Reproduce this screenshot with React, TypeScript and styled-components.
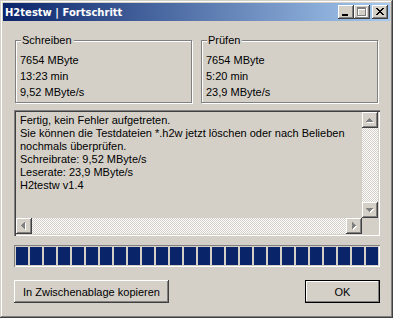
import React from "react";
import styled, { createGlobalStyle, css } from "styled-components";

const face = "#d4d0c8";
const shadow = "#808080";
const darkShadow = "#404040";
const navy = "#0a246a";

const GlobalStyle = createGlobalStyle`
    html, body {
        margin: 0;
        padding: 0;
    }
    body {
        background-color: ${face};
        font-family: "Liberation Sans", Arial, sans-serif;
        font-size: 11px;
        color: #000;
    }
`;

const raised = css`
    box-shadow: inset -1px -1px ${darkShadow}, inset 1px 1px #fff,
        inset -2px -2px ${shadow}, inset 2px 2px ${face};
`;

const Window = styled.div`
    width: 393px;
    height: 318px;
    box-sizing: border-box;
    padding: 3px;
    background-color: ${face};
    box-shadow: inset -1px -1px ${darkShadow}, inset 1px 1px ${face},
        inset -2px -2px ${shadow}, inset 2px 2px #fff;
    display: flex;
    flex-direction: column;
`;

const TitleBar = styled.div`
    height: 18px;
    display: flex;
    align-items: center;
    padding: 0 2px;
    background: linear-gradient(to right, ${navy}, #a6caf0);
    color: #fff;
`;

const TitleText = styled.div`
    flex: 1;
    font-family: "DejaVu Sans", Verdana, sans-serif;
    font-weight: bold;
    font-size: 10px;
    white-space: nowrap;
    user-select: none;
`;

const TitleButton = styled.div<{ $gap?: boolean }>`
    width: 16px;
    height: 14px;
    background-color: ${face};
    margin-left: ${(p) => (p.$gap ? "2px" : "0")};
    ${raised};
    svg {
        display: block;
    }
`;

const Content = styled.div`
    display: flex;
    flex-direction: column;
    padding: 19px 10px 12px 11px;
`;

const GroupRow = styled.div`
    display: flex;
    gap: 9px;
    padding-left: 1px;
`;

const Group = styled.section`
    position: relative;
    width: 177px;
    height: 63px;
    box-sizing: border-box;
    border: 1px solid ${shadow};
    box-shadow: inset 1px 1px #fff, 1px 1px #fff;
    padding: 11px 0 0 4px;
`;

const GroupLabel = styled.div`
    position: absolute;
    top: -7px;
    left: 5px;
    padding: 0 2px 0 1px;
    line-height: 13px;
    background-color: ${face};
`;

const Line = styled.div`
    line-height: 16px;
    white-space: nowrap;
`;

const Memo = styled.div`
    margin-top: 7px;
    height: 126px;
    box-sizing: border-box;
    padding: 2px;
    box-shadow: inset 1px 1px ${shadow}, inset 2px 2px ${darkShadow},
        inset -1px -1px #fff, inset -2px -2px ${face};
    display: grid;
    grid-template-columns: 1fr 16px;
    grid-template-rows: 1fr 16px;
`;

const MemoText = styled.div`
    padding: 2px 4px;
    line-height: 13px;
    white-space: pre;
    overflow: hidden;
`;

const ScrollBar = styled.div<{ $vertical?: boolean }>`
    display: flex;
    flex-direction: ${(p) => (p.$vertical ? "column" : "row")};
`;

const Track = styled.div`
    flex: 1;
    background: repeating-conic-gradient(#fff 0% 25%, ${face} 0% 50%) 0 0 / 2px 2px;
`;

const ScrollButton = styled.div`
    width: 16px;
    height: 16px;
    flex: none;
    background-color: ${face};
    ${raised};
    svg {
        display: block;
    }
`;

const Corner = styled.div`
    background-color: ${face};
`;

const Progress = styled.div`
    margin-top: 9px;
    height: 22px;
    box-sizing: border-box;
    padding: 2px;
    box-shadow: inset 1px 1px ${shadow}, inset -1px -1px #fff;
    display: flex;
    gap: 2px;
`;

const Block = styled.div`
    width: 12px;
    height: 18px;
    background-color: ${navy};
`;

const ButtonRow = styled.div`
    margin-top: 13px;
    display: flex;
    justify-content: space-between;
`;

const Button = styled.button<{ $width: number; $default?: boolean }>`
    width: ${(p) => p.$width}px;
    height: 23px;
    border: none;
    padding: 0;
    background-color: ${face};
    font-family: inherit;
    font-size: 11px;
    color: #000;
    ${(p) =>
        p.$default
            ? css`
                  box-shadow: inset 0 0 0 1px #000, inset -2px -2px ${shadow},
                      inset 2px 2px #fff;
              `
            : raised};
`;

type Dir = "up" | "down" | "left" | "right";

function arrowRects(dir: Dir, dx: number, dy: number, fill: string) {
    const rects = [];
    for (let i = 0; i < 4; i++) {
        let r;
        if (dir === "up") r = { x: 7 - i, y: 6 + i, w: 1 + 2 * i, h: 1 };
        else if (dir === "down") r = { x: 4 + i, y: 6 + i, w: 7 - 2 * i, h: 1 };
        else if (dir === "left") r = { x: 5 + i, y: 7 - i, w: 1, h: 1 + 2 * i };
        else r = { x: 6 + i, y: 4 + i, w: 1, h: 7 - 2 * i };
        rects.push(
            <rect key={fill + i} x={r.x + dx} y={r.y + dy} width={r.w} height={r.h} fill={fill} />
        );
    }
    return rects;
}

function Arrow({ dir }: { dir: Dir }) {
    return (
        <svg width="16" height="16" shapeRendering="crispEdges">
            {arrowRects(dir, 1, 1, "#fff")}
            {arrowRects(dir, 0, 0, shadow)}
        </svg>
    );
}

function MinGlyph() {
    return (
        <svg width="16" height="14" shapeRendering="crispEdges">
            <rect x="4" y="9" width="6" height="2" fill="#000" />
        </svg>
    );
}

function MaxGlyph() {
    const box = (o: number, c: string) => (
        <g key={c}>
            <rect x={3 + o} y={2 + o} width="9" height="2" fill={c} />
            <rect x={3 + o} y={4 + o} width="1" height="7" fill={c} />
            <rect x={11 + o} y={4 + o} width="1" height="7" fill={c} />
            <rect x={3 + o} y={10 + o} width="9" height="1" fill={c} />
        </g>
    );
    return (
        <svg width="16" height="14" shapeRendering="crispEdges">
            {box(1, "#fff")}
            {box(0, shadow)}
        </svg>
    );
}

function CloseGlyph() {
    const rows = [];
    for (let i = 0; i < 7; i++) {
        rows.push(<rect key={"a" + i} x={4 + i} y={3 + i} width="2" height="1" fill="#000" />);
        rows.push(<rect key={"b" + i} x={10 - i} y={3 + i} width="2" height="1" fill="#000" />);
    }
    return (
        <svg width="16" height="14" shapeRendering="crispEdges">
            {rows}
        </svg>
    );
}

const memoLines = [
    "Fertig, kein Fehler aufgetreten.",
    "Sie können die Testdateien *.h2w jetzt löschen oder nach Belieben",
    "nochmals überprüfen.",
    "Schreibrate: 9,52 MByte/s",
    "Leserate: 23,9 MByte/s",
    "H2testw v1.4",
];

function App() {
    const blocks = Array.from({ length: 26 }, (_, i) => i);

    return (
        <>
            <GlobalStyle />
            <Window>
                <TitleBar>
                    <TitleText>H2testw | Fortschritt</TitleText>
                    <TitleButton>
                        <MinGlyph />
                    </TitleButton>
                    <TitleButton>
                        <MaxGlyph />
                    </TitleButton>
                    <TitleButton $gap>
                        <CloseGlyph />
                    </TitleButton>
                </TitleBar>
                <Content>
                    <GroupRow>
                        <Group>
                            <GroupLabel>Schreiben</GroupLabel>
                            <Line>7654 MByte</Line>
                            <Line>13:23 min</Line>
                            <Line>9,52 MByte/s</Line>
                        </Group>
                        <Group>
                            <GroupLabel>Prüfen</GroupLabel>
                            <Line>7654 MByte</Line>
                            <Line>5:20 min</Line>
                            <Line>23,9 MByte/s</Line>
                        </Group>
                    </GroupRow>
                    <Memo>
                        <MemoText>{memoLines.join("\n")}</MemoText>
                        <ScrollBar $vertical>
                            <ScrollButton>
                                <Arrow dir="up" />
                            </ScrollButton>
                            <Track />
                            <ScrollButton>
                                <Arrow dir="down" />
                            </ScrollButton>
                        </ScrollBar>
                        <ScrollBar>
                            <ScrollButton>
                                <Arrow dir="left" />
                            </ScrollButton>
                            <Track />
                            <ScrollButton>
                                <Arrow dir="right" />
                            </ScrollButton>
                        </ScrollBar>
                        <Corner />
                    </Memo>
                    <Progress>
                        {blocks.map((b) => (
                            <Block key={b} />
                        ))}
                    </Progress>
                    <ButtonRow>
                        <Button $width={155}>In Zwischenablage kopieren</Button>
                        <Button $width={75} $default>
                            OK
                        </Button>
                    </ButtonRow>
                </Content>
            </Window>
        </>
    );
}

export default App;
